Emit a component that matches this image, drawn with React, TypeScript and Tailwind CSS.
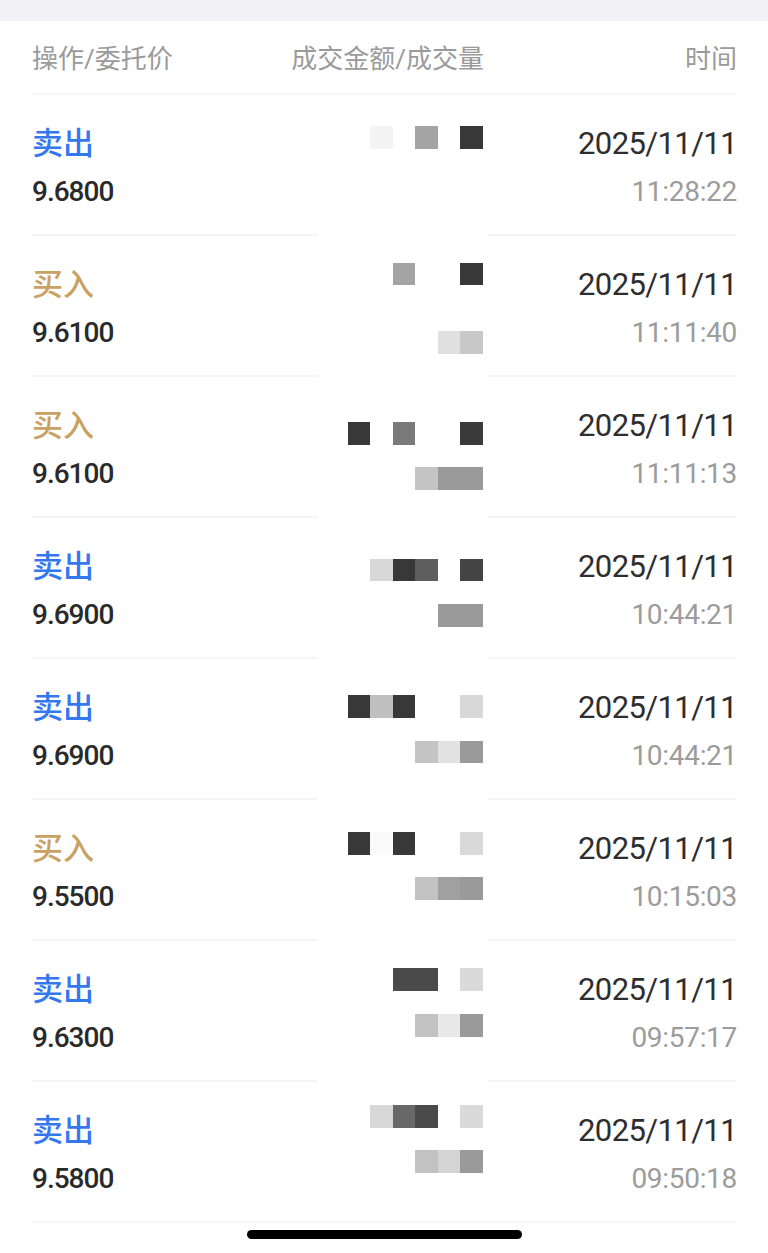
import React from "react";

type Trade = {
  side: "sell" | "buy";
  price: string;
  date: string;
  time: string;
};

const trades: Trade[] = [
  { side: "sell", price: "9.6800", date: "2025/11/11", time: "11:28:22" },
  { side: "buy", price: "9.6100", date: "2025/11/11", time: "11:11:40" },
  { side: "buy", price: "9.6100", date: "2025/11/11", time: "11:11:13" },
  { side: "sell", price: "9.6900", date: "2025/11/11", time: "10:44:21" },
  { side: "sell", price: "9.6900", date: "2025/11/11", time: "10:44:21" },
  { side: "buy", price: "9.5500", date: "2025/11/11", time: "10:15:03" },
  { side: "sell", price: "9.6300", date: "2025/11/11", time: "09:57:17" },
  { side: "sell", price: "9.5800", date: "2025/11/11", time: "09:50:18" },
];

// mosaic over the amount/volume column: row index -> 6 cell colours ("" = blank)
const mosaic: Record<number, string[]> = {
  0: ["", "#f4f4f4", "", "#a4a4a4", "", "#383838"],
  6: ["", "", "#a4a4a4", "", "", "#383838"],
  9: ["", "", "", "", "#e0e0e0", "#c8c8c8"],
  13: ["#383838", "", "#7a7a7a", "", "", "#3a3a3a"],
  15: ["", "", "", "#c4c4c4", "#9a9a9a", "#9a9a9a"],
  19: ["", "#d8d8d8", "#383838", "#5e5e5e", "", "#444444"],
  21: ["", "", "", "", "#9a9a9a", "#9a9a9a"],
  25: ["#383838", "#c0c0c0", "#383838", "", "", "#d8d8d8"],
  27: ["", "", "", "#c4c4c4", "#e2e2e2", "#9a9a9a"],
  31: ["#383838", "#fafafa", "#383838", "", "", "#d9d9d9"],
  33: ["", "", "", "#c2c2c2", "#a0a0a0", "#9a9a9a"],
  37: ["", "", "#4a4a4a", "#4a4a4a", "", "#dadada"],
  39: ["", "", "", "#c2c2c2", "#e8e8e8", "#9a9a9a"],
  43: ["", "#d8d8d8", "#686868", "#4a4a4a", "", "#dadada"],
  45: ["", "", "", "#c2c2c2", "#d4d4d4", "#9a9a9a"],
};

const cjk = "font-['Roboto','Noto_Sans_CJK_SC',sans-serif]";

function TradeRow({ t }: { t: Trade }) {
  const isSell = t.side === "sell";
  return (
    <div className="flex h-[141px] border-b-2 border-[#f5f5f5]">
      <div className="flex-1 pt-[30px]">
        <div
          className={`h-[38px] leading-[38px] text-[31px] font-medium ${
            isSell ? "text-[#3478f0]" : "text-[#c9a162]"
          }`}
        >
          {isSell ? "卖出" : "买入"}
        </div>
        <div className="mt-[13px] h-[32px] leading-[32px] text-[28px] font-medium tracking-[-1px] text-[#2a2a2a]">
          {t.price}
        </div>
      </div>
      <div className="w-[253px] pt-[30px] text-right">
        <div className="h-[38px] leading-[38px] text-[31px] tracking-[-0.6px] text-[#2e2e2e]">{t.date}</div>
        <div className="mt-[13px] h-[32px] leading-[32px] text-[28px] tracking-[-0.3px] text-[#9c9c9c]">
          {t.time}
        </div>
      </div>
    </div>
  );
}

export default function App() {
  return (
    <div className={`relative h-[1253px] w-[768px] overflow-hidden bg-white ${cjk}`}>
      {/* top gray strip */}
      <div className="h-[21px] bg-[#f1f1f6]" />

      <div className="pl-[32px] pr-[31px]">
        {/* column headers */}
        <div className="flex h-[74px] items-center border-b-2 border-[#f5f5f5] pt-[4px] text-[26px] text-[#9a9a9a]">
          <div className="flex-1">操作/委托价</div>
          <div className="text-right">成交金额/成交量</div>
          <div className="w-[253px] text-right">时间</div>
        </div>

        {trades.map((t, i) => (
          <TradeRow key={i} t={t} />
        ))}
      </div>

      {/* mosaic overlay covering amount/volume values */}
      <div className="absolute left-[318px] top-[97px] h-[1124px] w-[170px] bg-white">
        <div className="ml-[29.5px] mt-[29px] flex flex-col">
          {Array.from({ length: 46 }).map((_, r) => (
            <div key={r} className="flex h-[22.78px]">
              {(mosaic[r] || ["", "", "", "", "", ""]).map((c, ci) => (
                <div key={ci} className="h-full w-[22.5px]" style={{ backgroundColor: c || "transparent" }} />
              ))}
            </div>
          ))}
        </div>
      </div>

      {/* home indicator */}
      <div className="flex justify-center pt-[7px]">
        <div className="h-[9px] w-[275px] rounded-full bg-black" />
      </div>
    </div>
  );
}
